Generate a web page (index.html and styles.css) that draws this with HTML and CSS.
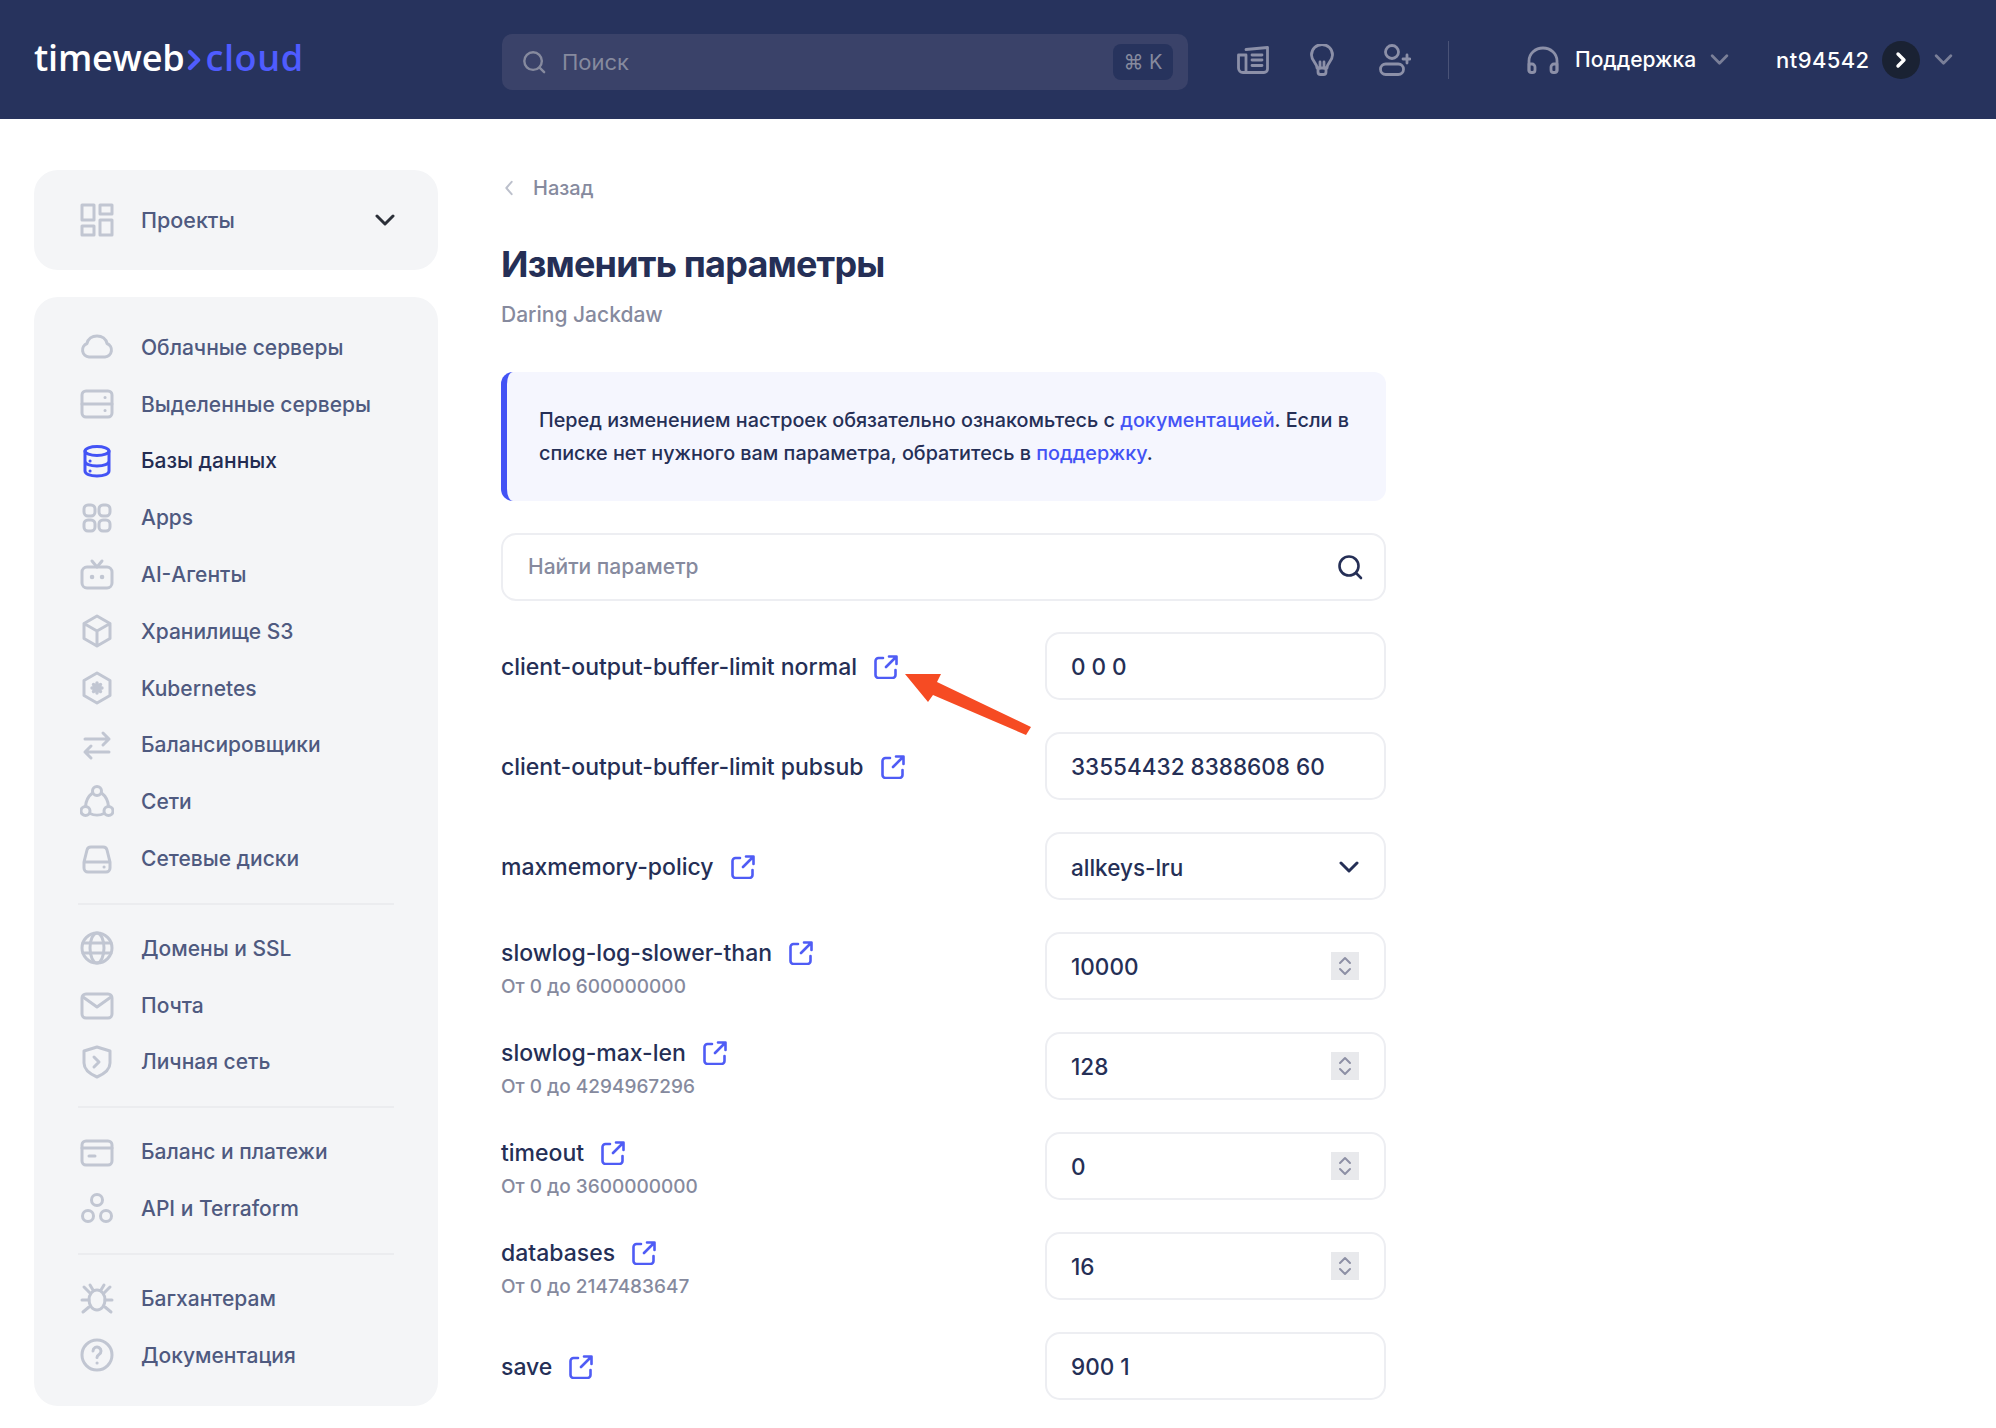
FILE: index.html
```html
<!DOCTYPE html>
<html lang="ru">
<head>
  <meta charset="UTF-8" />
  <title>Изменить параметры</title>
  <link rel="stylesheet" href="styles.css">
</head>
<body>
  <svg class="sprite" width="0" height="0">
    <symbol id="ext" viewBox="0 0 24 24"><path d="M9 3H4.500a3 3 0 0 0-3 3v14a3 3 0 0 0 3 3h14a3 3 0 0 0 3-3v-5M12 12 22 2M15 1.500h7.500V9" fill="none" stroke="currentColor" stroke-width="2.600" stroke-linecap="round" stroke-linejoin="round"/></symbol>
    <symbol id="search" viewBox="0 0 26 26"><circle cx="12" cy="12" r="9.500" fill="none" stroke="currentColor" stroke-width="2.600"/><path d="m19 19 5 5" stroke="currentColor" stroke-width="2.600" stroke-linecap="round"/></symbol>
    <symbol id="chev" viewBox="0 0 20 12"><path d="m2 2 8 8 8-8" fill="none" stroke="currentColor" stroke-width="3" stroke-linecap="round" stroke-linejoin="round"/></symbol>
    <symbol id="spinner" viewBox="0 0 14 28"><path d="m2 11 5-5 5 5M2 17l5 5 5-5" fill="none" stroke="currentColor" stroke-width="2" stroke-linecap="round" stroke-linejoin="round"/></symbol>
  </svg>

  <header class="topbar">
    <div class="logo">timeweb<svg class="logo-arrow" viewBox="0 0 14 22"><path d="m3 3 8 8-8 8" fill="none" stroke="currentColor" stroke-width="4.400" stroke-linecap="round" stroke-linejoin="round"/></svg><span class="logo-cloud">cloud</span></div>
    <div class="top-search">
      <svg class="top-search-icon"><use href="#search"/></svg>
      <span class="top-search-text">Поиск</span>
      <span class="kbd">⌘ K</span>
    </div>
    <div class="top-icons">
      <svg class="top-icon news" viewBox="0 0 32 28" fill="none" stroke="currentColor" stroke-width="2.800" stroke-linejoin="round" stroke-linecap="round"><path d="M9 3.500 30.500 1.500V23a3.500 3.500 0 0 1-3.500 3.500H6A4.500 4.500 0 0 1 1.500 22V9H9v17"/><path d="M15 9h10M15 14h10M15 19.500h10"/></svg>
      <svg class="top-icon bulb" viewBox="0 0 24 32" fill="none" stroke="currentColor" stroke-width="2.800" stroke-linejoin="round" stroke-linecap="round"><path d="M7 24c0-5-5.500-7-5.500-13a10.500 10.500 0 0 1 21 0c0 6-5.500 8-5.500 13z"/><path d="M8 24v4a2.500 2.500 0 0 0 2.500 2.500h3A2.500 2.500 0 0 0 16 28v-4M10 24v-6M14 24v-6"/></svg>
      <svg class="top-icon user" viewBox="0 0 32 32" fill="none" stroke="currentColor" stroke-width="2.800" stroke-linejoin="round" stroke-linecap="round"><circle cx="13" cy="8" r="6.500"/><rect x="1.500" y="20" width="23" height="10.500" rx="5.200"/><path d="M28 11v8M24 15h7"/></svg>
    </div>
    <div class="top-sep"></div>
    <div class="top-support">
      <svg class="headset" viewBox="0 0 32 28" fill="none" stroke="currentColor" stroke-width="2.800" stroke-linejoin="round" stroke-linecap="round"><path d="M2 25V15a14 13 0 0 1 28 0v10"/><path d="M2 18h3a3 3 0 0 1 3 3v3a2.500 2.500 0 0 1-2.500 2.500h-1A2.500 2.500 0 0 1 2 24zM30 18h-3a3 3 0 0 0-3 3v3a2.500 2.500 0 0 0 2.500 2.500h1A2.500 2.500 0 0 0 30 24z"/></svg>
      <span>Поддержка</span>
      <svg class="top-chev"><use href="#chev"/></svg>
    </div>
    <div class="top-user">
      <span class="user-name">nt94542</span>
      <span class="user-badge"><svg viewBox="0 0 12 18" fill="none" stroke="#fff" stroke-width="3.400" stroke-linecap="round" stroke-linejoin="round"><path d="m3 3 6 6-6 6"/></svg></span>
      <svg class="top-chev"><use href="#chev"/></svg>
    </div>
  </header>

  <div class="page">
    <aside class="sidebar">
      <div class="side-card projects">
        <svg class="nav-icon" viewBox="0 0 34 34"><path d="M2 2h12v15H2zM20 2h12v9H20zM2 23h12v9H2zM20 17h12v15H20z"/></svg>
        <span class="projects-name">Проекты</span>
        <svg class="projects-chev"><use href="#chev"/></svg>
      </div>

      <nav class="side-card nav">
        <a class="nav-item"><svg class="nav-icon" viewBox="0 0 34 34"><path d="M9 27a7 7 0 0 1-2-13.500C8 9 12 6 17 6s9 3 10 7.500A7 7 0 0 1 25 27z"/></svg>Облачные серверы</a>
        <a class="nav-item"><svg class="nav-icon" viewBox="0 0 34 34"><rect x="2" y="4" width="30" height="26" rx="4"/><path d="M2 17h30"/><path class="dot" d="M25 10.500h.1M25 23.500h.1"/></svg>Выделенные серверы</a>
        <a class="nav-item active"><svg class="nav-icon" viewBox="0 0 34 34"><ellipse cx="17" cy="7" rx="12" ry="4.500"/><path d="M5 7v20c0 3 5 5 12 5s12-2 12-5V7M5 17c0 3 5 5 12 5s12-2 12-5"/><path class="dot" d="M10 17h.1M10 27h.1"/></svg>Базы данных</a>
        <a class="nav-item"><svg class="nav-icon" viewBox="0 0 34 34"><rect x="4" y="4" width="11" height="11" rx="4"/><rect x="19" y="4" width="11" height="11" rx="4"/><rect x="4" y="19" width="11" height="11" rx="4"/><rect x="19" y="19" width="11" height="11" rx="4"/></svg>Apps</a>
        <a class="nav-item"><svg class="nav-icon" viewBox="0 0 34 34"><rect x="2" y="9" width="30" height="21" rx="5"/><path d="m12 3 5 6 5-6"/><path class="dot thick" d="M12 19h.1M22 19h.1"/></svg>AI-Агенты</a>
        <a class="nav-item"><svg class="nav-icon" viewBox="0 0 34 34"><path d="M17 2 30 9.500v15L17 32 4 24.500v-15zM4 9.500 17 17l13-7.500M17 17v15"/></svg>Хранилище S3</a>
        <a class="nav-item"><svg class="nav-icon" viewBox="0 0 34 34"><path d="M17 2 30 9.500v15L17 32 4 24.500v-15z"/><path class="dot star" d="M17 12v10M12 17h10M13.500 13.500l7 7M20.500 13.500l-7 7"/></svg>Kubernetes</a>
        <a class="nav-item"><svg class="nav-icon" viewBox="0 0 34 34"><path d="M5 11h24M23 5l6 6-6 6M29 24H5M11 18l-6 6 6 6"/></svg>Балансировщики</a>
        <a class="nav-item"><svg class="nav-icon" viewBox="0 0 34 34"><circle cx="17" cy="6" r="4.500"/><circle cx="5.500" cy="26" r="4.500"/><circle cx="28.500" cy="26" r="4.500"/><path d="M12.500 8c-4 3-6.500 7-7 13.500M21.500 8c4 3 6.500 7 7 13.500M10 28.500c4 2 10 2 14 0"/></svg>Сети</a>
        <a class="nav-item"><svg class="nav-icon" viewBox="0 0 34 34"><path d="M4 20 7 8a4 4 0 0 1 4-3h12a4 4 0 0 1 4 3l3 12v6a4 4 0 0 1-4 4H8a4 4 0 0 1-4-4zM4 20h26"/><path class="dot" d="M24 25h.1"/></svg>Сетевые диски</a>

        <div class="nav-sep"></div>

        <a class="nav-item"><svg class="nav-icon" viewBox="0 0 34 34"><circle cx="17" cy="17" r="15"/><ellipse cx="17" cy="17" rx="7" ry="15"/><path d="M3 12h28M3 22h28"/></svg>Домены и SSL</a>
        <a class="nav-item"><svg class="nav-icon" viewBox="0 0 34 34"><rect x="2" y="6" width="30" height="24" rx="4"/><path d="m3 9 14 10L31 9"/></svg>Почта</a>
        <a class="nav-item"><svg class="nav-icon" viewBox="0 0 34 34"><path d="M17 2 30 6v12c0 7-6 11-13 14C10 29 4 25 4 18V6z"/><path d="m14 12 5 5-5 5"/></svg>Личная сеть</a>

        <div class="nav-sep"></div>

        <a class="nav-item"><svg class="nav-icon" viewBox="0 0 34 34"><rect x="2" y="6" width="30" height="24" rx="4"/><path d="M2 13h30M9 21h6"/></svg>Баланс и платежи</a>
        <a class="nav-item"><svg class="nav-icon" viewBox="0 0 34 34"><circle cx="17" cy="8" r="5.500"/><circle cx="8" cy="24" r="5.500"/><circle cx="26" cy="24" r="5.500"/></svg>API и Terraform</a>

        <div class="nav-sep"></div>

        <a class="nav-item"><svg class="nav-icon" viewBox="0 0 34 34"><ellipse cx="17" cy="19" rx="8" ry="10"/><path d="M10 4l3 5M24 4l-3 5M4 6l6 6M30 6l-6 6M2 19h7M32 19h-7M3 31l6-5M31 31l-6-5"/></svg>Багхантерам</a>
        <a class="nav-item"><svg class="nav-icon" viewBox="0 0 34 34"><circle cx="17" cy="17" r="15"/><path d="M13 13a4 4 0 1 1 6 3.500c-1.500 1-2 1.500-2 3"/><path class="dot" d="M17 25h.1"/></svg>Документация</a>
      </nav>
    </aside>

    <main class="content">
      <a class="back"><svg viewBox="0 0 10 18" fill="none" stroke="currentColor" stroke-width="2.200" stroke-linecap="round" stroke-linejoin="round"><path d="M8 2 2 9l6 7"/></svg>Назад</a>
      <h1 class="title">Изменить параметры</h1>
      <div class="subtitle">Daring Jackdaw</div>

      <div class="notice">
        <div>Перед изменением настроек обязательно ознакомьтесь с <a>документацией</a>. Если в</div>
        <div>списке нет нужного вам параметра, обратитесь в <a>поддержку</a>.</div>
      </div>

      <div class="field find">
        <span class="placeholder">Найти параметр</span>
        <svg class="find-icon"><use href="#search"/></svg>
      </div>

      <div class="params">
        <div class="param">
          <div class="param-name">client-output-buffer-limit normal<svg class="ext"><use href="#ext"/></svg></div>
          <div class="field value">0 0 0</div>
        </div>
        <div class="param">
          <div class="param-name">client-output-buffer-limit pubsub<svg class="ext"><use href="#ext"/></svg></div>
          <div class="field value">33554432 8388608 60</div>
        </div>
        <div class="param">
          <div class="param-name">maxmemory-policy<svg class="ext"><use href="#ext"/></svg></div>
          <div class="field value select">allkeys-lru<svg class="select-chev"><use href="#chev"/></svg></div>
        </div>
        <div class="param">
          <div class="param-label"><div class="param-name">slowlog-log-slower-than<svg class="ext"><use href="#ext"/></svg></div><div class="param-hint">От 0 до 600000000</div></div>
          <div class="field value">10000<span class="spin"><svg><use href="#spinner"/></svg></span></div>
        </div>
        <div class="param">
          <div class="param-label"><div class="param-name">slowlog-max-len<svg class="ext"><use href="#ext"/></svg></div><div class="param-hint">От 0 до 4294967296</div></div>
          <div class="field value">128<span class="spin"><svg><use href="#spinner"/></svg></span></div>
        </div>
        <div class="param">
          <div class="param-label"><div class="param-name">timeout<svg class="ext"><use href="#ext"/></svg></div><div class="param-hint">От 0 до 3600000000</div></div>
          <div class="field value">0<span class="spin"><svg><use href="#spinner"/></svg></span></div>
        </div>
        <div class="param">
          <div class="param-label"><div class="param-name">databases<svg class="ext"><use href="#ext"/></svg></div><div class="param-hint">От 0 до 2147483647</div></div>
          <div class="field value">16<span class="spin"><svg><use href="#spinner"/></svg></span></div>
        </div>
        <div class="param">
          <div class="param-name">save<svg class="ext"><use href="#ext"/></svg></div>
          <div class="field value">900 1</div>
        </div>
      </div>

      <svg class="arrow" viewBox="0 0 130 63"><path d="M1 1H37L33 9 127 54 122 62 29 22 24 29z" fill="#f64b23"/></svg>
    </main>
  </div>
</body>
</html>
```

FILE: styles.css
```css
:root {
  --navy: #27335d;
  --text: #252f56;
  --side-text: #4f5a80;
  --muted: #868a9e;
  --blue: #4353f5;
  --border: #edeef2;
  --side-bg: #f4f5f7;
  --icon: #c1c6d2;
  --top-icon: #8c90a8;
}

* {
  box-sizing: border-box;
}

body {
  margin: 0;
  background: #fff;
  color: var(--text);
  font-family: "Inter", "Noto Sans", sans-serif;
}

.sprite {
  position: absolute;
}

/* top bar */
.topbar {
  height: 119px;
  background: var(--navy);
  display: flex;
  align-items: center;
  color: #fff;
  padding-left: 34px;
}

.logo {
  width: 468px;
  display: flex;
  align-items: center;
  font-family: "Open Sans", sans-serif;
  font-size: 36px;
  font-weight: 600;
  letter-spacing: -0.2px;
  margin-top: -4px;
}

.logo-arrow {
  width: 14px;
  height: 22px;
  margin: 5px 4px 0 3px;
  color: #4f5cff;
}

.logo-cloud {
  color: #4f5cff;
  letter-spacing: 0.6px;
}

.top-search {
  width: 686px;
  height: 56px;
  background: #3a4269;
  border-radius: 10px;
  display: flex;
  align-items: center;
  padding: 0 15px 0 20px;
  margin-top: 4px;
  color: #868a9e;
}

.top-search-icon {
  width: 24px;
  height: 24px;
  margin-right: 16px;
}

.top-search-text {
  font-size: 22px;
  flex: 1;
}

.kbd {
  width: 60px;
  height: 36px;
  background: #27335d;
  border-radius: 8px;
  display: flex;
  align-items: center;
  justify-content: center;
  font-size: 20px;
}

.top-icons {
  display: flex;
  align-items: center;
  margin-left: 49px;
  color: var(--top-icon);
}

.news {
  width: 32px;
  height: 28px;
}

.bulb {
  width: 24px;
  height: 32px;
  margin-left: 41px;
}

.user {
  width: 32px;
  height: 32px;
  margin-left: 45px;
}

.top-sep {
  width: 1px;
  height: 38px;
  background: #4a5377;
  margin-left: 37px;
}

.top-support {
  display: flex;
  align-items: center;
  margin-left: 78px;
  font-size: 21px;
  font-weight: 500;
}

.headset {
  width: 32px;
  height: 28px;
  color: var(--top-icon);
  margin-right: 16px;
}

.top-chev {
  width: 19px;
  height: 11px;
  color: #7a7f98;
  margin-left: 14px;
}

.top-user {
  display: flex;
  align-items: center;
  margin-left: 47px;
  font-size: 22px;
  font-weight: 500;
}

.user-name {
  letter-spacing: 0.4px;
}

.user-badge {
  width: 38px;
  height: 38px;
  border-radius: 50%;
  background: #1a2233;
  display: flex;
  align-items: center;
  justify-content: center;
  margin-left: 12px;
}

.user-badge svg {
  width: 12px;
  height: 18px;
}

/* page */
.page {
  display: flex;
  align-items: flex-start;
  padding: 51px 0 0 34px;
}

.sidebar {
  width: 404px;
  margin-right: 63px;
}

.side-card {
  background: var(--side-bg);
  border-radius: 24px;
}

.projects {
  height: 100px;
  display: flex;
  align-items: center;
  padding: 0 43px 0 46px;
  margin-bottom: 27px;
  font-size: 21.500px;
  font-weight: 500;
  color: var(--side-text);
}

.projects-name {
  flex: 1;
}

.projects-chev {
  width: 20px;
  height: 12px;
  color: #2b2f38;
}

.nav-icon {
  width: 34px;
  height: 34px;
  flex: none;
  margin-right: 27px;
  fill: none;
  stroke: var(--icon);
  stroke-width: 3;
  stroke-linecap: round;
  stroke-linejoin: round;
}

.nav {
  height: 1109px;
  padding: 22px 44px 0 46px;
}

.nav-item {
  height: 56.800px;
  display: flex;
  align-items: center;
  font-size: 21px;
  font-weight: 500;
  color: var(--side-text);
}

.nav-item.active {
  color: #232c52;
}

.active .nav-icon {
  stroke: var(--blue);
}

.thick {
  stroke-width: 4.500;
}

.star {
  stroke-width: 3.400;
}

.nav-sep {
  height: 2px;
  background: #ebecef;
  margin: 16px 0 15px -2px;
}

/* main column */
.content {
  width: 885px;
  position: relative;
}

.back {
  display: flex;
  align-items: center;
  height: 28px;
  margin-top: 4px;
  font-size: 20px;
  font-weight: 500;
  color: var(--muted);
}

.back svg {
  width: 10px;
  height: 16px;
  margin: 0 19px 0 3px;
  color: #bcc0cc;
}

.title {
  margin: 39px 0 0;
  font-size: 36px;
  line-height: 46px;
  font-weight: 700;
  letter-spacing: -0.8px;
}

.subtitle {
  margin-top: 14px;
  font-size: 21px;
  line-height: 28px;
  font-weight: 500;
  color: var(--muted);
}

.notice {
  margin-top: 43px;
  height: 129px;
  background: #f5f6fe;
  border-left: 6px solid var(--blue);
  border-radius: 12px;
  padding: 32px 30px 32px 32px;
  font-size: 19.800px;
  line-height: 33px;
  font-weight: 500;
}

.notice a {
  color: var(--blue);
}

.field {
  border: 2px solid var(--border);
  border-radius: 15px;
  background: #fff;
  display: flex;
  align-items: center;
}

.find {
  margin-top: 32px;
  height: 68px;
  padding: 0 21px 0 25px;
  justify-content: space-between;
}

.placeholder {
  font-size: 21px;
  font-weight: 500;
  color: var(--muted);
  margin-top: -2px;
}

.find-icon {
  width: 26px;
  height: 26px;
}

.params {
  margin-top: 31px;
  display: flex;
  flex-direction: column;
  gap: 32px;
}

.param {
  display: flex;
  align-items: center;
  justify-content: space-between;
}

.param-label {
  padding-top: 3px;
}

.param-name {
  display: flex;
  align-items: center;
  padding-top: 2px;
  font-size: 23px;
  line-height: 30px;
  font-weight: 500;
}

.ext {
  width: 24px;
  height: 24px;
  margin-left: 17px;
  color: #4f5cf5;
}

.param-hint {
  margin-top: 7px;
  font-size: 19px;
  line-height: 24px;
  font-weight: 500;
  color: var(--muted);
}

.value {
  width: 341px;
  height: 68px;
  padding: 0 25px 0 24px;
  justify-content: space-between;
  font-size: 22.500px;
  font-weight: 500;
}

.select {
  padding-top: 2px;
}

.select-chev {
  width: 20px;
  height: 12px;
}

.spin {
  width: 28px;
  height: 28px;
  background: #e8e9ec;
  color: #8d90a5;
  display: flex;
  align-items: center;
  justify-content: center;
}

.spin svg {
  width: 14px;
  height: 28px;
}

/* annotation over the form */
.arrow {
  position: absolute;
  left: 403px;
  top: 503px;
  width: 130px;
  height: 63px;
}
```
